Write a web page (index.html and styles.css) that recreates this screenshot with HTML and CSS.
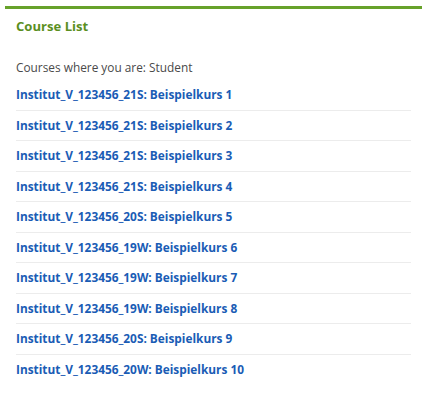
FILE: index.html
```html
<!DOCTYPE html>
<html>
<head>
<meta charset="utf-8">
<link rel="stylesheet" href="styles.css">
</head>
<body>
<section class="block">
  <h2 class="title">Course List</h2>
  <p class="role">Courses where you are: Student</p>
  <ul class="courses">
    <li><a href="#">Institut_V_123456_21S: Beispielkurs 1</a></li>
    <li><a href="#">Institut_V_123456_21S: Beispielkurs 2</a></li>
    <li><a href="#">Institut_V_123456_21S: Beispielkurs 3</a></li>
    <li><a href="#">Institut_V_123456_21S: Beispielkurs 4</a></li>
    <li><a href="#">Institut_V_123456_20S: Beispielkurs 5</a></li>
    <li><a href="#">Institut_V_123456_19W: Beispielkurs 6</a></li>
    <li><a href="#">Institut_V_123456_19W: Beispielkurs 7</a></li>
    <li><a href="#">Institut_V_123456_19W: Beispielkurs 8</a></li>
    <li><a href="#">Institut_V_123456_20S: Beispielkurs 9</a></li>
    <li><a href="#">Institut_V_123456_20W: Beispielkurs 10</a></li>
  </ul>
</section>
</body>
</html>
```
FILE: styles.css
```css
html, body {
  margin: 0;
  padding: 0;
  background: #fff;
}
body {
  font-family: "Open Sans", "Liberation Sans", sans-serif;
}
.block {
  margin: 6px 7px 0 5px;
  border-top: 3px solid #67a22a;
  padding: 0 11px 0 11px;
}
.title {
  margin: 0;
  padding-top: 7px;
  font-size: 13.1px;
  font-weight: 700;
  line-height: 20px;
  color: #5b8f1f;
}
.role {
  margin: 23px 0 0 0;
  font-size: 11.85px;
  line-height: 16px;
  color: #4a4a4a;
}
.courses {
  list-style: none;
  margin: 5px 0 0 0;
  padding: 0;
}
.courses li {
  border-bottom: 1px solid #ececec;
  padding: 6px 0 6.5px 0;
  font-size: 11.85px;
  line-height: 17px;
}
.courses li:last-child {
  border-bottom: none;
}
.courses a {
  font-size: 11.85px;
  font-weight: 700;
  color: #1a5cb5;
  text-decoration: none;
}
```
